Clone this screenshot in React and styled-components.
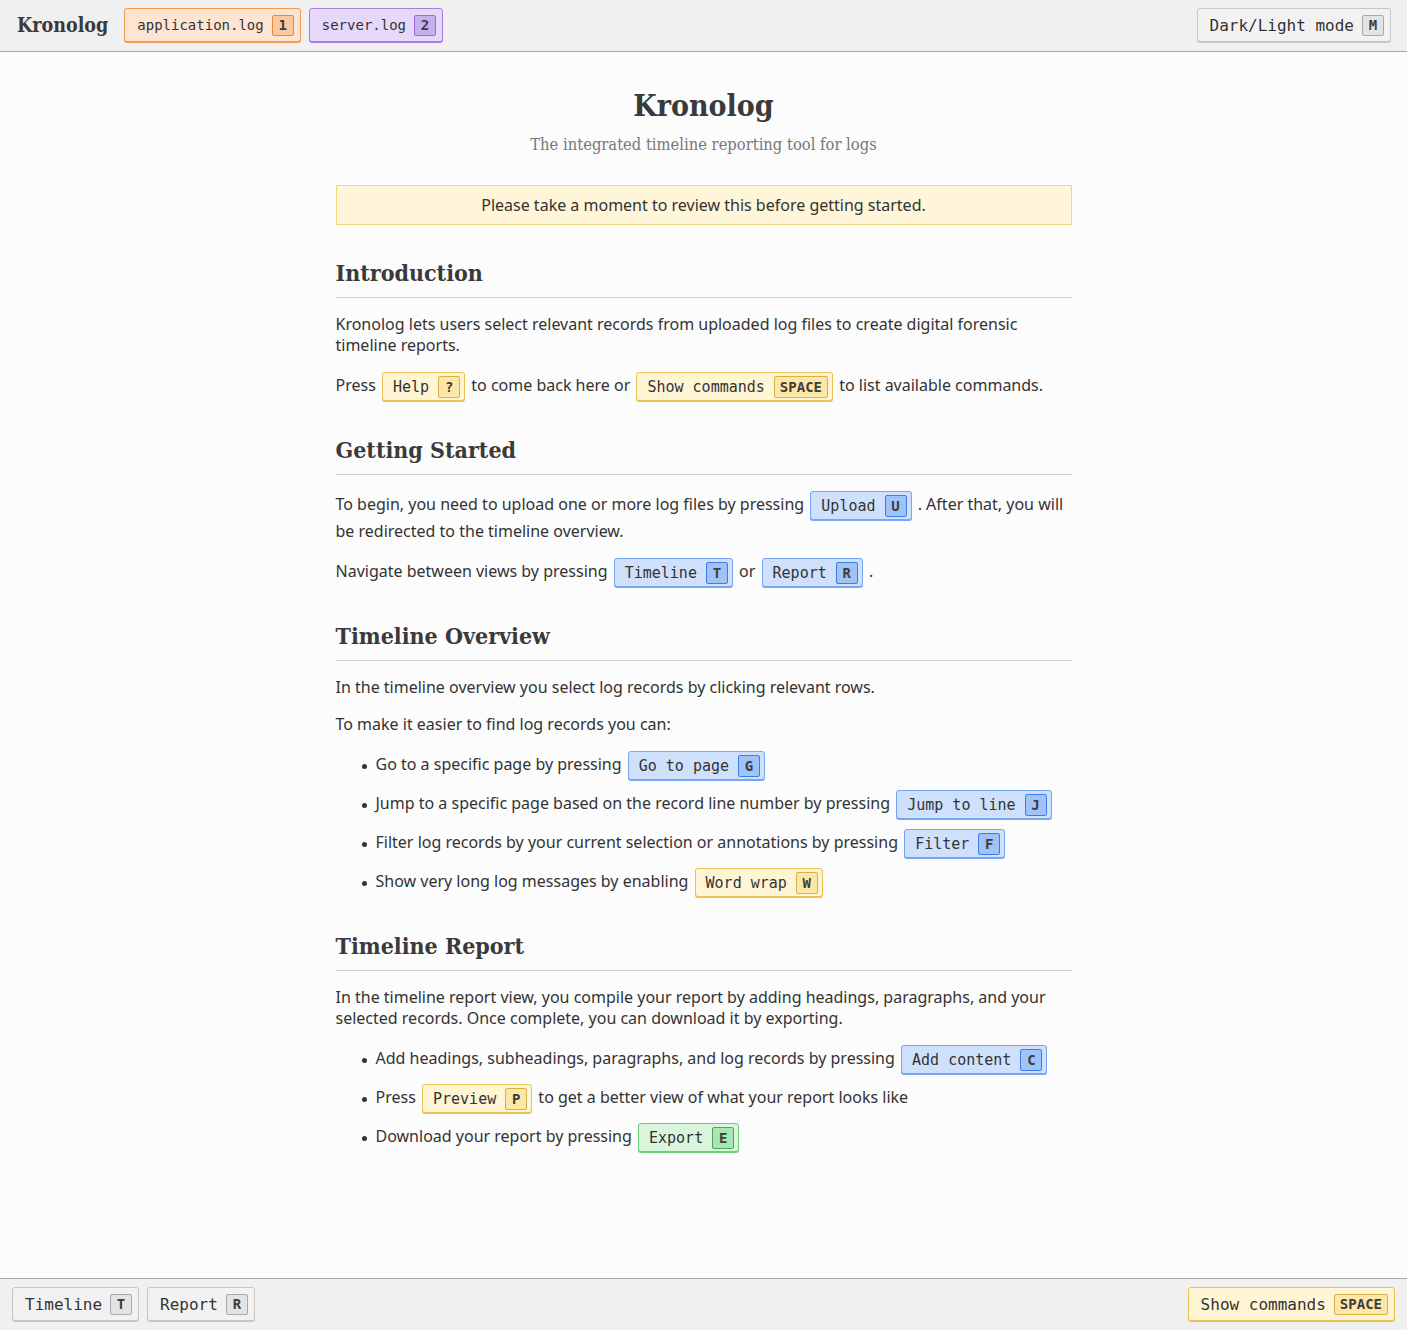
import React from 'react';
import styled, { createGlobalStyle, css } from 'styled-components';

const GlobalStyle = createGlobalStyle`
  html, body {
    margin: 0;
    padding: 0;
  }
  body {
    font-family: "Noto Sans", "Open Sans", sans-serif;
    color: #333;
    background: #fcfcfc;
  }
`;

const serif = `"DejaVu Serif Condensed", "Liberation Serif", serif`;
const mono = `"DejaVu Sans Mono", "Liberation Mono", monospace`;

const tones = {
  yellow: { bg: '#fff4d4', border: '#e9c253', kbd: '#fde7a6', kbdBorder: '#d7b04c' },
  blue: { bg: '#cfe0fd', border: '#76a7f5', kbd: '#9fc2f7', kbdBorder: '#3c7ce6' },
  green: { bg: '#d9f6dd', border: '#6bcf79', kbd: '#a9e6b1', kbdBorder: '#46a955' },
  orange: { bg: '#fee5d3', border: '#f19a52', kbd: '#fcc8a0', kbdBorder: '#de8a48' },
  purple: { bg: '#e5d8f8', border: '#a97ee3', kbd: '#c7b0ef', kbdBorder: '#9a6ed9' },
  gray: { bg: '#f2f2f2', border: '#c6c6c6', kbd: '#e3e3e3', kbdBorder: '#a9a9a9' },
};

const big = size => size === 'lg' || size === 'md';

const Page = styled.div`
  display: flex;
  flex-direction: column;
  height: 100vh;
`;

const Bar = styled.header`
  flex: 0 0 auto;
  height: 51px;
  display: flex;
  align-items: center;
  padding: 0 16px 0 17px;
  background: #f0f0f1;
  ${props => props.bottom
    ? css`border-top: 1px solid #a8a8a8; padding: 0 12px;`
    : css`border-bottom: 1px solid #a8a8a8;`}
`;

const Logo = styled.div`
  font-family: ${serif};
  font-weight: bold;
  font-size: 19.5px;
  color: #3a3a3a;
  margin-right: 16px;
`;

const BarGroup = styled.div`
  display: flex;
  gap: 8px;
`;

const Spacer = styled.div`
  flex: 1;
`;

const Key = styled.button`
  display: inline-flex;
  align-items: center;
  gap: ${props => big(props.size) ? '8px' : '9px'};
  box-sizing: border-box;
  height: ${props => big(props.size) ? '34px' : '29px'};
  padding: 0 ${props => big(props.size) ? '6px' : '4px'} 0 ${props => big(props.size) ? '12px' : '10px'};
  font-family: ${mono};
  font-size: ${props => props.size === 'lg' ? '16px' : props.size === 'md' ? '14px' : '15px'};
  color: #333;
  background: ${props => tones[props.tone].bg};
  border: 1px solid ${props => tones[props.tone].border};
  border-radius: 3px;
  box-shadow: 0 1px 0 ${props => tones[props.tone].border};
  vertical-align: middle;
  margin: ${props => props.inline ? '0 2px 1px' : '0 0 1px'};
  cursor: pointer;
`;

const Kbd = styled.kbd`
  display: inline-flex;
  align-items: center;
  justify-content: center;
  box-sizing: border-box;
  min-width: 22px;
  height: ${props => big(props.size) ? '21px' : '22px'};
  padding: 0 5px;
  font-family: ${mono};
  font-size: 14px;
  font-weight: bold;
  color: #3d3d3d;
  background: ${props => tones[props.tone].kbd};
  border: 1px solid ${props => tones[props.tone].kbdBorder};
  border-radius: 2px;
`;

const Shortcut = ({ tone, label, k, size, inline = true }) => (
  <Key tone={tone} size={size} inline={inline}>
    {label}
    <Kbd tone={tone} size={size}>{k}</Kbd>
  </Key>
);

const Main = styled.main`
  flex: 1;
  overflow: auto;
  background: #fcfcfc;
`;

const Article = styled.article`
  max-width: 736px;
  margin: 0 auto;
  padding: 33px 0 40px;
  font-size: 16px;
  line-height: 21px;
`;

const Title = styled.h1`
  margin: 0;
  text-align: center;
  font-family: ${serif};
  font-size: 30px;
  line-height: 42px;
  color: #3a3a3a;
`;

const Subtitle = styled.p`
  margin: 5px 0 28px;
  text-align: center;
  font-family: ${serif};
  font-size: 16.4px;
  line-height: 25px;
  color: #777;
`;

const Notice = styled.div`
  padding: 8px;
  text-align: center;
  line-height: 22px;
  background: #fff5d8;
  border: 1px solid #f4d77c;
  color: #333;
`;

const Heading = styled.h2`
  margin: 32px 0 16px;
  padding-bottom: 9px;
  border-bottom: 1px solid #cfcfcf;
  font-family: ${serif};
  font-size: 23px;
  line-height: 31px;
  color: #3a3a3a;
`;

const Para = styled.p`
  margin: 16px 0;
`;

const List = styled.ul`
  margin: 14px 0 16px;
  padding-left: 40px;
  list-style: none;
`;

const Item = styled.li`
  position: relative;
  margin-bottom: 9px;

  &::before {
    content: "";
    position: absolute;
    left: -14px;
    top: 50%;
    width: 5px;
    height: 5px;
    margin-top: -2px;
    border-radius: 50%;
    background: #333;
  }
`;

const App = () => (
  <Page>
    <GlobalStyle />
    <Bar>
      <Logo>Kronolog</Logo>
      <BarGroup>
        <Shortcut tone="orange" size="md" inline={false} label="application.log" k="1" />
        <Shortcut tone="purple" size="md" inline={false} label="server.log" k="2" />
      </BarGroup>
      <Spacer />
      <Shortcut tone="gray" size="lg" inline={false} label="Dark/Light mode" k="M" />
    </Bar>
    <Main>
      <Article>
        <Title>Kronolog</Title>
        <Subtitle>The integrated timeline reporting tool for logs</Subtitle>
        <Notice>Please take a moment to review this before getting started.</Notice>

        <Heading>Introduction</Heading>
        <Para>Kronolog lets users select relevant records from uploaded log files to create digital forensic timeline reports.</Para>
        <Para>
          Press <Shortcut tone="yellow" label="Help" k="?" /> to come back here or{' '}
          <Shortcut tone="yellow" label="Show commands" k="SPACE" /> to list available commands.
        </Para>

        <Heading>Getting Started</Heading>
        <Para>
          To begin, you need to upload one or more log files by pressing{' '}
          <Shortcut tone="blue" label="Upload" k="U" /> . After that, you will be redirected to the timeline overview.
        </Para>
        <Para>
          Navigate between views by pressing <Shortcut tone="blue" label="Timeline" k="T" /> or{' '}
          <Shortcut tone="blue" label="Report" k="R" /> .
        </Para>

        <Heading>Timeline Overview</Heading>
        <Para>In the timeline overview you select log records by clicking relevant rows.</Para>
        <Para>To make it easier to find log records you can:</Para>
        <List>
          <Item>Go to a specific page by pressing <Shortcut tone="blue" label="Go to page" k="G" /></Item>
          <Item>Jump to a specific page based on the record line number by pressing <Shortcut tone="blue" label="Jump to line" k="J" /></Item>
          <Item>Filter log records by your current selection or annotations by pressing <Shortcut tone="blue" label="Filter" k="F" /></Item>
          <Item>Show very long log messages by enabling <Shortcut tone="yellow" label="Word wrap" k="W" /></Item>
        </List>

        <Heading>Timeline Report</Heading>
        <Para>In the timeline report view, you compile your report by adding headings, paragraphs, and your selected records. Once complete, you can download it by exporting.</Para>
        <List>
          <Item>Add headings, subheadings, paragraphs, and log records by pressing <Shortcut tone="blue" label="Add content" k="C" /></Item>
          <Item>Press <Shortcut tone="yellow" label="Preview" k="P" /> to get a better view of what your report looks like</Item>
          <Item>Download your report by pressing <Shortcut tone="green" label="Export" k="E" /></Item>
        </List>
      </Article>
    </Main>
    <Bar bottom>
      <BarGroup>
        <Shortcut tone="gray" size="lg" inline={false} label="Timeline" k="T" />
        <Shortcut tone="gray" size="lg" inline={false} label="Report" k="R" />
      </BarGroup>
      <Spacer />
      <Shortcut tone="yellow" size="lg" inline={false} label="Show commands" k="SPACE" />
    </Bar>
  </Page>
);

export default App;
